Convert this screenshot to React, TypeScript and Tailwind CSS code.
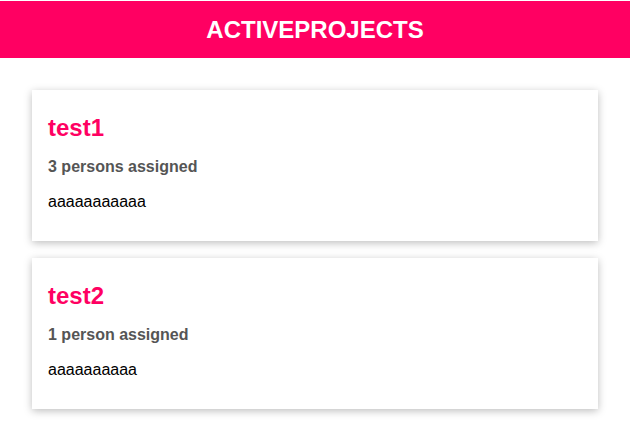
const projects = [
  { id: 'p1', title: 'test1', people: 3, description: 'aaaaaaaaaaa' },
  { id: 'p2', title: 'test2', people: 1, description: 'aaaaaaaaaa' },
]

const ProjectItem = ({ title, people, description }: { title: string; people: number; description: string }) => {
  return (
    <li className="bg-white px-4 pt-6 pb-[30px] shadow-[0_2px_8px_rgba(0,0,0,0.26)]">
      <h2 className="text-2xl leading-[27px] font-bold text-[#ff0062]">{title}</h2>
      <h3 className="mt-4 text-base leading-[19px] font-bold text-[#555555]">
        {people} {people === 1 ? 'person' : 'persons'} assigned
      </h3>
      <p className="mt-4 text-base leading-[19px] text-black">{description}</p>
    </li>
  )
}

export default function App() {
  return (
    <div className="min-h-screen bg-white font-['Liberation_Sans',Arial,sans-serif]">
      <header className="mt-px h-[57px] bg-[#ff0062] flex items-center justify-center">
        <h2 className="text-2xl font-bold text-white uppercase">activeprojects</h2>
      </header>
      <ul className="mx-8 mt-8 flex flex-col gap-[17px]">
        {projects.map((p) => (
          <ProjectItem key={p.id} title={p.title} people={p.people} description={p.description} />
        ))}
      </ul>
    </div>
  )
}
